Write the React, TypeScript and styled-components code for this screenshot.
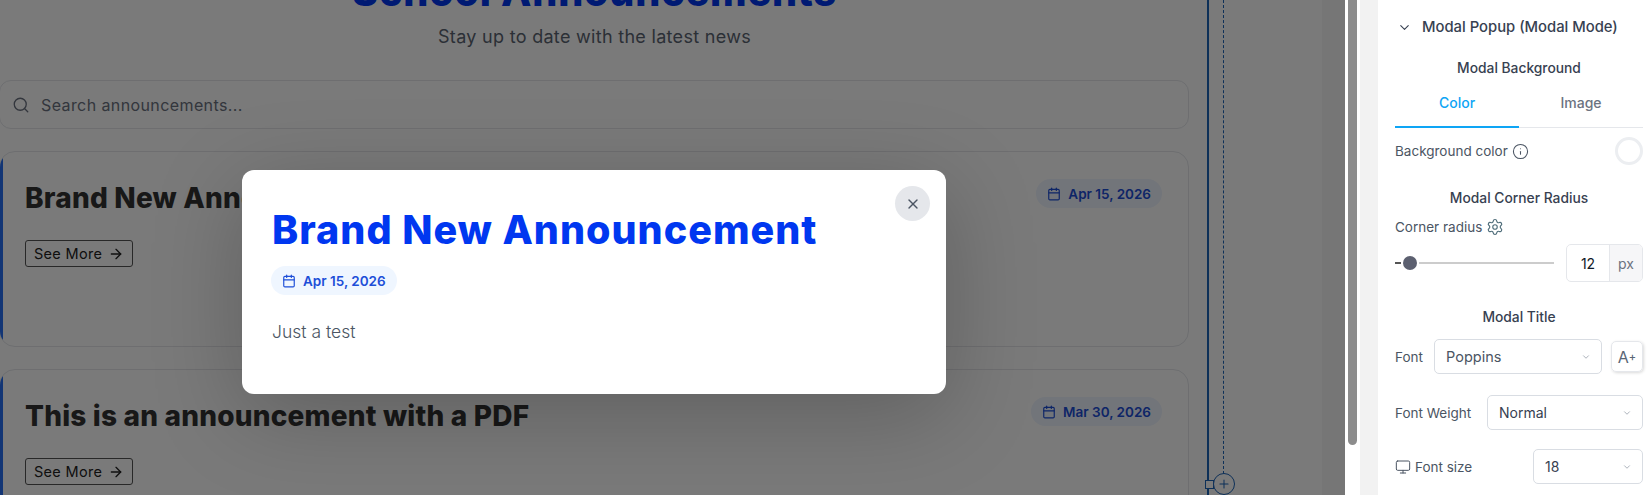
import React from "react";
import styled, { createGlobalStyle } from "styled-components";
import { ArrowRight, Calendar, ChevronDown, Info, Monitor, Plus, Search, Settings, X } from "lucide-react";

const Global = createGlobalStyle`
  html, body { margin: 0; padding: 0; background: #fff; overflow: hidden; }
  * { box-sizing: border-box; }
`;

const display = `Inter, "Noto Sans", sans-serif`;
const ui = `Inter, "Noto Sans", sans-serif`;

const Root = styled.div`
  display: flex;
  width: 1649px;
  height: 495px;
  overflow: hidden;
`;

const Canvas = styled.div`
  position: relative;
  flex: none;
  width: 1345px;
  height: 495px;
  overflow: hidden;
  background: #fff;
`;

const Page = styled.div`
  width: 1189px;
  font-family: ${display};
`;

const Header = styled.header`
  display: flow-root;
  height: 80px;
  text-align: center;
`;

const PageTitle = styled.h1`
  margin: -30px 0 0;
  font-size: 39.5px;
  line-height: 44px;
  font-weight: 800;
  letter-spacing: 0.8px;
  color: #0037f0;
`;

const Subtitle = styled.p`
  margin: 10px 0 0;
  font-size: 18px;
  line-height: 26px;
  letter-spacing: 0.3px;
  color: #5b6472;
`;

const SearchBox = styled.div`
  display: flex;
  align-items: center;
  gap: 11px;
  height: 49px;
  margin-bottom: 22px;
  margin-left: -1px;
  padding-left: 12px;
  border: 1px solid #e5e7eb;
  border-radius: 12px;
  color: #6b7280;
  font-size: 16px;
  letter-spacing: 0.4px;
`;

const Card = styled.article`
  position: relative;
  display: flex;
  justify-content: space-between;
  align-items: flex-start;
  height: 196px;
  margin: 0 0 22px -1px;
  padding: 25px 26px 0 25px;
  border: 1px solid #e5e7eb;
  border-radius: 16px;
  overflow: hidden;

  &::before {
    content: "";
    position: absolute;
    left: -1px;
    top: -1px;
    bottom: -1px;
    width: 4px;
    background: #2670f5;
  }
`;

const CardBody = styled.div`
  display: flex;
  flex-direction: column;
  align-items: flex-start;
  gap: 21px;
`;

const CardTitle = styled.h2`
  margin: 0;
  font-size: 28px;
  line-height: 42px;
  font-weight: 800;
  letter-spacing: 0.2px;
  color: #333;
  white-space: nowrap;
`;

const SeeMore = styled.button`
  display: flex;
  align-items: center;
  gap: 6px;
  height: 27px;
  padding: 0 8px;
  border: 1px solid #555;
  border-radius: 3px;
  background: transparent;
  color: #222;
  font-family: ${display};
  font-size: 14.5px;
  letter-spacing: 0.3px;
`;

const DateBadge = styled.span`
  display: inline-flex;
  align-items: center;
  gap: 7px;
  height: 29px;
  margin-top: 2px;
  padding: 0 11px;
  border-radius: 15px;
  background: #eef4ff;
  color: #1d4ed8;
  font-size: 13.5px;
  font-weight: 600;
  white-space: nowrap;
`;

const Guide = styled.div<{ $x: number; $kind: "solid" | "dash" | "thin" }>`
  position: absolute;
  top: 0;
  left: ${p => p.$x}px;
  height: ${p => (p.$kind === "dash" ? 474 : 495)}px;
  border-left: ${p => (p.$kind === "solid" ? "2px solid #1c64b8" : p.$kind === "dash" ? "1px dashed #1c64b8" : "1px solid #7aa0cc")};
`;

const Handle = styled.div`
  position: absolute;
  left: 1205px;
  top: 480px;
  width: 9px;
  height: 9px;
  border: 1px solid #1c64b8;
  background: #fff;
`;

const AddButton = styled.div`
  position: absolute;
  left: 1213px;
  top: 473px;
  width: 22px;
  height: 22px;
  display: flex;
  align-items: center;
  justify-content: center;
  border: 1px solid #1c64b8;
  border-radius: 50%;
  background: #fff;
  color: #1c64b8;
`;

const RightShade = styled.div`
  position: absolute;
  top: 0;
  right: 0;
  width: 23px;
  height: 495px;
  background: #f6f6f6;
`;

const Overlay = styled.div`
  position: absolute;
  inset: 0;
  background: rgba(0, 0, 0, 0.52);
`;

const Modal = styled.section`
  position: absolute;
  left: 242px;
  top: 170px;
  width: 704px;
  height: 224px;
  padding: 31px 30px 0;
  border-radius: 12px;
  background: #fff;
  box-shadow: 0 20px 90px rgba(0, 0, 0, 0.22);
  font-family: ${display};
`;

const ModalTitle = styled.h2`
  margin: 0;
  font-size: 39.5px;
  line-height: 58px;
  font-weight: 800;
  letter-spacing: 1px;
  color: #0037f0;
`;

const ModalMeta = styled.div`
  margin-top: 7px;
  margin-left: -1px;
`;

const ModalBadge = styled(DateBadge)`
  margin-top: 0;
  background: #eff6ff;
`;

const ModalText = styled.p`
  margin: 24px 0 0;
  font-size: 17.5px;
  line-height: 26px;
  font-weight: 300;
  color: #4b5563;
`;

const CloseButton = styled.button`
  position: absolute;
  right: 16px;
  top: 16px;
  width: 35px;
  height: 35px;
  display: flex;
  align-items: center;
  justify-content: center;
  padding: 0;
  border: 0;
  border-radius: 50%;
  background: #e5e7eb;
  color: #4b5563;
`;

const Gutter = styled.div`
  flex: none;
  width: 15px;
  padding: 0 3px;
  background: #fff;
`;

const Thumb = styled.div`
  width: 9px;
  height: 445px;
  border-radius: 0 0 5px 5px;
  background: #8c8c8c;
`;

const Backdrop = styled.div`
  flex: none;
  width: 18px;
  background: #f2f2f2;
`;

const Panel = styled.aside`
  flex: none;
  width: 271px;
  height: 494px;
  margin-top: 1px;
  padding: 0 6px 0 17px;
  border-radius: 6px 0 0 0;
  background: #fff;
  font-family: ${ui};
  color: #4b5563;
  overflow: hidden;
`;

const PanelHead = styled.div`
  display: flex;
  align-items: center;
  gap: 10px;
  height: 30px;
  margin-top: 11px;
  padding-left: 2px;
  color: #374151;
  font-size: 14.8px;
  font-weight: 500;
  white-space: nowrap;
`;

const SubHeading = styled.div<{ $top: number }>`
  height: 20px;
  margin-top: ${p => p.$top}px;
  line-height: 20px;
  text-align: center;
  color: #374151;
  font-size: 13.8px;
  font-weight: 500;
`;

const Tabs = styled.div`
  display: flex;
  height: 50px;
  border-bottom: 1px solid #e5e7eb;
`;

const Tab = styled.div<{ $active?: boolean }>`
  flex: 1;
  display: flex;
  align-items: center;
  justify-content: center;
  margin-bottom: -1px;
  font-size: 14px;
  font-weight: 500;
  color: ${p => (p.$active ? "#0ea5f5" : "#6b7280")};
  border-bottom: 2px solid ${p => (p.$active ? "#0ea5f5" : "transparent")};
`;

const ColorRow = styled.div`
  display: flex;
  align-items: center;
  justify-content: space-between;
  height: 46px;
`;

const Label = styled.span`
  display: inline-flex;
  align-items: center;
  gap: 4px;
  font-size: 13.5px;
  color: #4b5563;
  white-space: nowrap;
  flex: none;
`;

const Swatch = styled.div`
  width: 28px;
  height: 28px;
  border: 3px solid #eceef1;
  border-radius: 50%;
  background: #fff;
`;

const LabelRow = styled.div`
  display: flex;
  align-items: center;
  height: 20px;
  margin-top: 9px;
`;

const SliderRow = styled.div`
  display: flex;
  align-items: center;
  height: 38px;
  margin-top: 7px;
`;

const Dash = styled.div`
  width: 6px;
  height: 2px;
  background: #555;
`;

const Knob = styled.div`
  width: 14px;
  height: 14px;
  margin-left: 2px;
  border-radius: 50%;
  background: #5c6070;
`;

const Track = styled.div`
  width: 135px;
  height: 2px;
  margin-left: 2px;
  background: #ccc;
`;

const NumberBox = styled.div`
  display: flex;
  width: 77px;
  height: 38px;
  margin-left: auto;
  border: 1px solid #e5e7eb;
  border-radius: 5px;
  overflow: hidden;
  font-size: 14px;
`;

const NumberValue = styled.div`
  flex: 1;
  display: flex;
  align-items: center;
  justify-content: center;
  color: #111827;
`;

const Unit = styled.div`
  width: 33px;
  display: flex;
  align-items: center;
  justify-content: center;
  border-left: 1px solid #e5e7eb;
  background: #f6f6f8;
  color: #6b7280;
`;

const FieldRow = styled.div<{ $top: number }>`
  display: flex;
  align-items: center;
  justify-content: space-between;
  height: 35px;
  margin-top: ${p => p.$top}px;
`;

const Select = styled.div<{ $width: number; $large?: boolean }>`
  display: flex;
  align-items: center;
  justify-content: space-between;
  flex: none;
  width: ${p => p.$width}px;
  height: 35px;
  padding: 0 11px;
  border: 1px solid #d9dde3;
  border-radius: 5px;
  font-size: ${p => (p.$large ? 14.5 : 14)}px;
  color: ${p => (p.$large ? "#4b5563" : "#374151")};
  svg { color: #9ca3af; margin-right: -1px; }
`;

const FontGroup = styled.div`
  display: flex;
  align-items: center;
  gap: 9px;
`;

const FontStyleButton = styled.div`
  width: 32px;
  height: 31px;
  display: flex;
  align-items: center;
  justify-content: center;
  border: 1px solid #e5e7eb;
  border-radius: 5px;
  box-shadow: 1px 1px 3px rgba(0, 0, 0, 0.15);
  font-size: 16px;
  color: #5a6675;
`;

const SmallPlus = styled.span`
  font-size: 11px;
  font-weight: 500;
`;

const AnnouncementCard = ({ title, date }: { title: string; date: string }) => (
  <Card>
    <CardBody>
      <CardTitle>{title}</CardTitle>
      <SeeMore>
        See More <ArrowRight size={16} strokeWidth={2} />
      </SeeMore>
    </CardBody>
    <DateBadge>
      <Calendar size={14} strokeWidth={2} />
      {date}
    </DateBadge>
  </Card>
);

export default function App() {
  return (
    <Root>
      <Global />
      <Canvas>
        <Page>
          <Header>
            <PageTitle>School Announcements</PageTitle>
            <Subtitle>Stay up to date with the latest news</Subtitle>
          </Header>
          <SearchBox>
            <Search size={18} strokeWidth={1.75} />
            Search announcements...
          </SearchBox>
          <AnnouncementCard title="Brand New Announcement" date="Apr 15, 2026" />
          <AnnouncementCard title="This is an announcement with a PDF" date="Mar 30, 2026" />
        </Page>
        <Guide $x={1207} $kind="solid" />
        <Guide $x={1223} $kind="dash" />
        <Guide $x={1322} $kind="thin" />
        <Handle />
        <AddButton>
          <Plus size={14} strokeWidth={1.75} />
        </AddButton>
        <RightShade />
        <Overlay />
        <Modal>
          <ModalTitle>Brand New Announcement</ModalTitle>
          <ModalMeta>
            <ModalBadge>
              <Calendar size={14} strokeWidth={2} />
              Apr 15, 2026
            </ModalBadge>
          </ModalMeta>
          <ModalText>Just a test</ModalText>
          <CloseButton>
            <X size={16} strokeWidth={2} />
          </CloseButton>
        </Modal>
      </Canvas>
      <Gutter>
        <Thumb />
      </Gutter>
      <Backdrop />
      <Panel>
        <PanelHead>
          <ChevronDown size={15} strokeWidth={1.75} />
          Modal Popup (Modal Mode)
        </PanelHead>
        <SubHeading $top={16}>Modal Background</SubHeading>
        <Tabs>
          <Tab $active>Color</Tab>
          <Tab>Image</Tab>
        </Tabs>
        <ColorRow>
          <Label>
            Background color <Info size={17} strokeWidth={1.5} />
          </Label>
          <Swatch />
        </ColorRow>
        <SubHeading $top={14}>Modal Corner Radius</SubHeading>
        <LabelRow>
          <Label>
            Corner radius <Settings size={18} strokeWidth={1.5} color="#4f6d7a" />
          </Label>
        </LabelRow>
        <SliderRow>
          <Dash />
          <Knob />
          <Track />
          <NumberBox>
            <NumberValue>12</NumberValue>
            <Unit>px</Unit>
          </NumberBox>
        </SliderRow>
        <SubHeading $top={25}>Modal Title</SubHeading>
        <FieldRow $top={12}>
          <Label>Font</Label>
          <FontGroup>
            <Select $width={168} $large>
              Poppins
              <ChevronDown size={10} strokeWidth={2} />
            </Select>
            <FontStyleButton>
              A<SmallPlus>+</SmallPlus>
            </FontStyleButton>
          </FontGroup>
        </FieldRow>
        <FieldRow $top={21}>
          <Label>Font Weight</Label>
          <Select $width={156}>
            Normal
            <ChevronDown size={10} strokeWidth={2} />
          </Select>
        </FieldRow>
        <FieldRow $top={19}>
          <Label>
            <Monitor size={16} strokeWidth={1.5} /> Font size
          </Label>
          <Select $width={110}>
            18
            <ChevronDown size={10} strokeWidth={2} />
          </Select>
        </FieldRow>
      </Panel>
    </Root>
  );
}
